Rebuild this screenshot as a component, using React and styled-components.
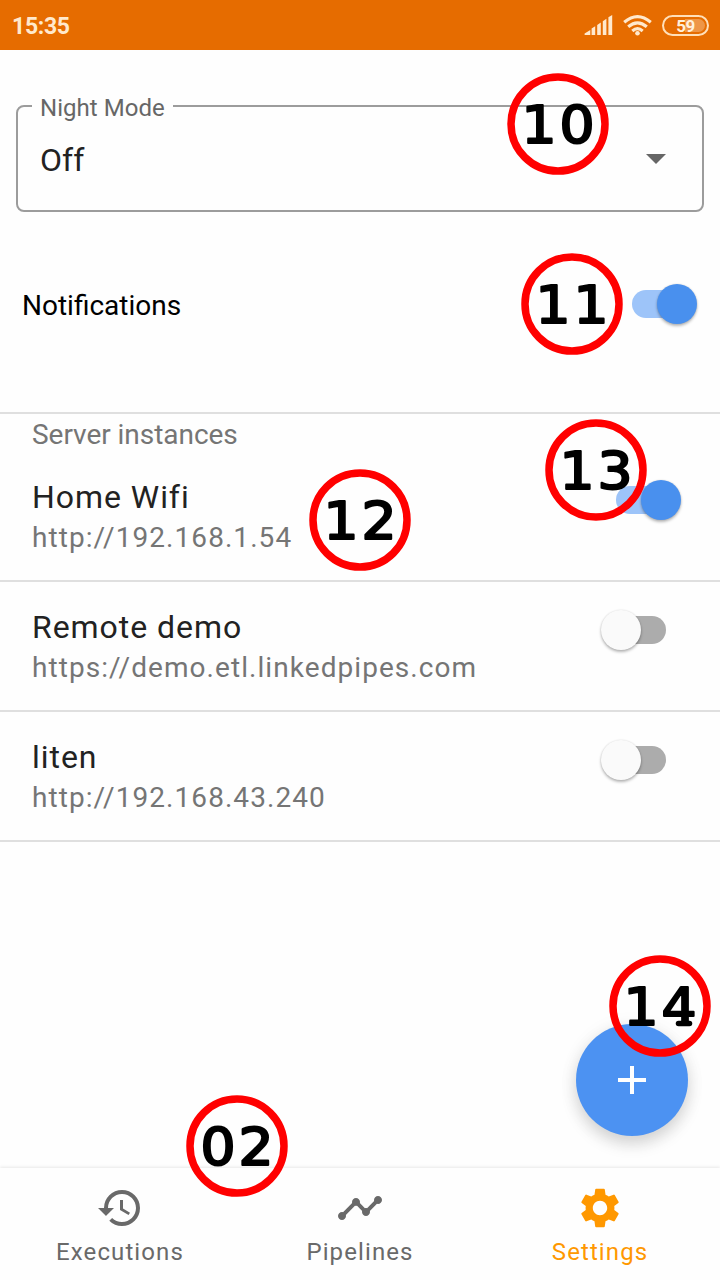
import React from "react";
import styled, { createGlobalStyle } from "styled-components";
import { MdArrowDropDown, MdHistory, MdTimeline, MdSettings } from "react-icons/md";

const GlobalStyle = createGlobalStyle`
  *, *::before, *::after { box-sizing: border-box; }
  body { margin: 0; background: #fefefe; font-family: Roboto, "Liberation Sans", sans-serif; }
`;

const Screen = styled.div`
  position: relative;
  display: flex;
  flex-direction: column;
  width: 720px;
  height: 1280px;
  overflow: hidden;
  background: #fefefe;
`;

const StatusBar = styled.header`
  display: flex;
  align-items: center;
  justify-content: space-between;
  flex: none;
  height: 50px;
  padding: 0 11px 0 12px;
  background: #e66c00;
  color: #ffe9cd;
`;

const Clock = styled.span`
  font-size: 23px;
  font-weight: 700;
  line-height: 26px;
  letter-spacing: -0.3px;
  padding-top: 3px;
`;

const StatusIcons = styled.div`
  display: flex;
  align-items: center;
  gap: 10px;
`;

const Battery = styled.span`
  display: flex;
  width: 47px;
  height: 21px;
  padding: 2px;
  border: 2px solid #ffdfb8;
  border-radius: 11px;
`;

const Charge = styled.span`
  flex: 1;
  border-radius: 7px;
  background: linear-gradient(90deg, transparent 50%, #ee9647 50%);
  font-size: 17px;
  font-weight: 700;
  line-height: 14px;
  letter-spacing: -0.6px;
  text-align: center;
  color: #fff0dc;
`;

const Content = styled.main`
  display: flex;
  flex-direction: column;
  flex: 1;
`;

const SelectField = styled.fieldset`
  height: 121px;
  margin: 41px 16px 0;
  padding: 0 22px;
  border: 2px solid #9c9c9c;
  border-radius: 8px;
  min-width: 0;
`;

const SelectLabel = styled.legend`
  margin-left: -8px;
  padding: 4px 8px 0;
  font-size: 24px;
  line-height: 26px;
  letter-spacing: 0.05px;
  color: #676767;
`;

const SelectControl = styled.div`
  display: flex;
  align-items: center;
  justify-content: space-between;
  height: 74px;
`;

const SelectValue = styled.span`
  padding-top: 4px;
  font-size: 32px;
  line-height: 38px;
  color: #222;
`;

const SelectArrow = styled(MdArrowDropDown)`
  width: 48px;
  height: 48px;
  color: #666;
`;

const PreferenceRow = styled.div`
  display: flex;
  align-items: center;
  justify-content: space-between;
  height: 202px;
  padding: 0 38px 16px 22px;
  border-bottom: 2px solid #dfdfdf;
  font-size: 28px;
  color: #000;
`;

const PreferenceLabel = styled.span`
  padding-top: 3px;
`;

const SectionTitle = styled.h2`
  margin: 0;
  padding: 4px 32px 0;
  font-size: 28px;
  font-weight: 400;
  line-height: 34px;
  letter-spacing: -0.04px;
  color: #757575;
`;

const ServerRow = styled.div`
  display: flex;
  align-items: flex-start;
  justify-content: space-between;
  height: 130px;
  padding: 25px 54px 0 32px;
  border-bottom: 2px solid #dfdfdf;
`;

const ServerName = styled.div`
  font-size: 32px;
  line-height: 40px;
  letter-spacing: 0.95px;
  color: #222;
`;

const ServerUrl = styled.div`
  padding-top: 1px;
  font-size: 28px;
  line-height: 40px;
  letter-spacing: 1.06px;
  color: #757575;
`;

const SwitchTrack = styled.span`
  display: flex;
  align-items: center;
  justify-content: ${(p) => (p.$on ? "flex-end" : "flex-start")};
  flex: none;
  width: 50px;
  height: 28px;
  margin-top: ${(p) => p.$top || 0}px;
  border-radius: 14px;
  background: ${(p) => (p.$on ? "#9dc4f9" : "#acacac")};
`;

const SwitchThumb = styled.span`
  flex: none;
  width: 40px;
  height: 40px;
  margin: 0 -15px;
  border-radius: 50%;
  background: ${(p) => (p.$on ? "#4990ee" : "#fafafa")};
  box-shadow: 0 2px 3px rgba(0, 0, 0, 0.28), 0 0 2px rgba(0, 0, 0, 0.12);
`;

const AddButton = styled.button`
  position: absolute;
  right: 32px;
  bottom: 144px;
  display: flex;
  align-items: center;
  justify-content: center;
  width: 112px;
  height: 112px;
  padding: 0;
  border: 0;
  border-radius: 50%;
  background: #4c92f2;
  box-shadow: 0 8px 16px rgba(0, 0, 0, 0.15), 0 2px 20px rgba(0, 0, 0, 0.06);
`;

const BottomNav = styled.nav`
  position: relative;
  display: flex;
  flex: none;
  height: 112px;
  background: #fefefe;
  box-shadow: 0 -1px 3px rgba(0, 0, 0, 0.09);
`;

const NavItem = styled.a`
  display: flex;
  flex: 1;
  flex-direction: column;
  align-items: center;
  padding-top: 16px;
  font-size: 24px;
  line-height: 28px;
  letter-spacing: 1.1px;
  color: ${(p) => (p.$active ? "#ff9800" : "#696969")};

  svg { width: 48px; height: 48px; margin-bottom: 6px; }
`;

const MarkerBadge = styled.svg`
  position: absolute;
  left: ${(p) => p.$x - 51}px;
  top: ${(p) => p.$y - 51}px;
  width: 102px;
  height: 102px;

  circle { fill: none; stroke: #f00; stroke-width: 7.5px; }
  text {
    font-family: "DejaVu Sans", sans-serif;
    font-size: 51px;
    text-anchor: middle;
    fill: #000;
    stroke: #000;
    stroke-width: 2.2px;
    stroke-linejoin: round;
  }
  line { stroke: #000; stroke-width: 5.5px; stroke-linecap: round; }
`;

function Marker({ text, x, y }) {
  return (
    <MarkerBadge $x={x} $y={y} viewBox="0 0 102 102">
      <circle cx="51" cy="51" r="47" />
      <text y="70" transform="scale(1.08 1)">
        <tspan x="29.6">{text[0]}</tspan>
        <tspan x="64.8">{text[1]}</tspan>
      </text>
      {text[1] === "4" && <line x1="69.5" y1="68.5" x2="80.5" y2="68.5" />}
    </MarkerBadge>
  );
}

function Switch({ on, top }) {
  return (
    <SwitchTrack $on={on} $top={top} role="switch" aria-checked={on}>
      <SwitchThumb $on={on} />
    </SwitchTrack>
  );
}

function SignalIcon() {
  return (
    <svg width="29" height="21" viewBox="0 0 29 21" fill="currentColor">
      <path d="M0.6 20V18.4L6.3 15V20ZM7.6 20V13.6L11.2 11.2V20ZM13.2 20V10L16.8 7.6V20ZM18.8 20V6.2L22.4 3.8V20ZM24.4 20V2.2L28.2 0V20Z" />
    </svg>
  );
}

function WifiIcon() {
  return (
    <svg width="29" height="21" viewBox="0 0 29 21" fill="none" stroke="currentColor" strokeWidth="3.1">
      <path d="M1.2 7.3Q14.5-4 27.8 7.3M5.2 11.8Q14.5 3.8 23.8 11.8M9.3 16Q14.5 11.4 19.7 16" />
      <circle cx="14.5" cy="18.3" r="2.3" fill="currentColor" stroke="none" />
    </svg>
  );
}

const servers = [
  { name: "Home Wifi", url: "http://192.168.1.54", on: true },
  { name: "Remote demo", url: "https://demo.etl.linkedpipes.com", on: false },
  { name: "liten", url: "http://192.168.43.240", on: false },
];

const markers = [
  { text: "10", x: 558, y: 124 },
  { text: "11", x: 572, y: 304 },
  { text: "12", x: 360, y: 520 },
  { text: "13", x: 596, y: 470 },
  { text: "14", x: 660, y: 1006 },
  { text: "02", x: 237, y: 1146 },
];

export default function App() {
  return (
    <Screen>
      <GlobalStyle />
      <StatusBar>
        <Clock>15:35</Clock>
        <StatusIcons>
          <SignalIcon />
          <WifiIcon />
          <Battery><Charge>59</Charge></Battery>
        </StatusIcons>
      </StatusBar>
      <Content>
        <SelectField>
          <SelectLabel>Night Mode</SelectLabel>
          <SelectControl>
            <SelectValue>Off</SelectValue>
            <SelectArrow />
          </SelectControl>
        </SelectField>
        <PreferenceRow>
          <PreferenceLabel>Notifications</PreferenceLabel>
          <Switch on />
        </PreferenceRow>
        <SectionTitle>Server instances</SectionTitle>
        {servers.map((s) => (
          <ServerRow key={s.name}>
            <div>
              <ServerName>{s.name}</ServerName>
              <ServerUrl>{s.url}</ServerUrl>
            </div>
            <Switch on={s.on} top={9} />
          </ServerRow>
        ))}
      </Content>
      <AddButton aria-label="Add server">
        <svg width="28" height="28" viewBox="0 0 28 28" fill="#fff">
          <path d="M12 0H16V12H28V16H16V28H12V16H0V12H12Z" />
        </svg>
      </AddButton>
      <BottomNav>
        <NavItem><MdHistory />Executions</NavItem>
        <NavItem><MdTimeline />Pipelines</NavItem>
        <NavItem $active><MdSettings />Settings</NavItem>
      </BottomNav>
      {markers.map((m) => (
        <Marker key={m.text} {...m} />
      ))}
    </Screen>
  );
}
